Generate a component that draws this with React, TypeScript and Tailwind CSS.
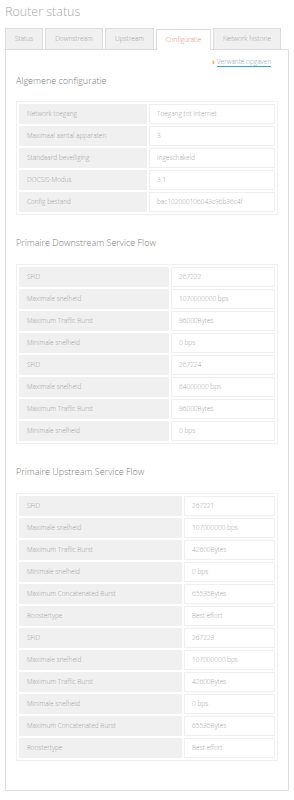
import React from 'react';

type Row = [string, string];

const general: Row[] = [
  ['Network toegang', 'Toegang tot Internet'],
  ['Maximaal aantal apparaten', '3'],
  ['Standaard beveiliging', 'Ingeschakeld'],
  ['DOCSIS-Modus', '3.1'],
  ['Config bestand', 'bac102000106043c96b36c4f'],
];

const downstream: Row[] = [
  ['SFID', '267222'],
  ['Maximale snelheid', '1070000000 bps'],
  ['Maximum Traffic Burst', '96000Bytes'],
  ['Minimale snelheid', '0 bps'],
  ['SFID', '267224'],
  ['Maximale snelheid', '64000000 bps'],
  ['Maximum Traffic Burst', '96000Bytes'],
  ['Minimale snelheid', '0 bps'],
];

const upstream: Row[] = [
  ['SFID', '267221'],
  ['Maximale snelheid', '107000000 bps'],
  ['Maximum Traffic Burst', '42600Bytes'],
  ['Minimale snelheid', '0 bps'],
  ['Maximum Concatenated Burst', '65535Bytes'],
  ['Roostertype', 'Best effort'],
  ['SFID', '267223'],
  ['Maximale snelheid', '107000000 bps'],
  ['Maximum Traffic Burst', '42600Bytes'],
  ['Minimale snelheid', '0 bps'],
  ['Maximum Concatenated Burst', '65535Bytes'],
  ['Roostertype', 'Best effort'],
];

const tabs: { label: string; width: string }[] = [
  { label: 'Status', width: 'w-[38px]' },
  { label: 'Downstream', width: 'w-[58px]' },
  { label: 'Upstream', width: 'w-[49px]' },
  { label: 'Configuratie', width: 'w-[55px]' },
  { label: 'Network historie', width: 'w-[68px]' },
];

function InfoTable({ rows, labelWidth }: { rows: Row[]; labelWidth: string }) {
  return (
    <table className="w-full border-separate border-spacing-[2px] border border-[#f0f0f0] bg-white text-[6.5px] text-[#a0a0a0]">
      <tbody>
        {rows.map(([label, value], i) => (
          <tr key={i} className="h-[20px]">
            <td className={`${labelWidth} bg-[#f0f0f0] pl-[8px]`}>{label}</td>
            <td className="border border-[#efefef] bg-white pl-[7px]">{value}</td>
          </tr>
        ))}
      </tbody>
    </table>
  );
}

export default function App() {
  return (
    <div className="min-h-[800px] w-[294px] bg-white px-[5px] pt-[4px] font-['Open_Sans',sans-serif] font-light">
      <h1 className="text-[12.5px] leading-[16px] font-light text-[#a8a8a8]">Router status</h1>

      <div className="mt-[8px] flex gap-[2px]">
        {tabs.map((t) => {
          const active = t.label === 'Configuratie';
          return (
            <div
              key={t.label}
              className={`${t.width} flex h-[21px] shrink-0 items-center justify-center whitespace-nowrap border border-b-0 border-[#dcdcdc] text-[6.5px] ${
                active ? 'relative top-[1px] bg-white text-[#f2866a]' : 'bg-[#f0f0f0] text-[#a0a0a0]'
              }`}
            >
              {t.label}
            </div>
          );
        })}
      </div>

      <div className="h-[742px] border border-[#dcdcdc] px-[10px]">
        <div className="mt-[6px] flex justify-end pr-[7px]">
          <a className="flex items-center gap-[2px] text-[6.5px] text-[#8aa0b0]">
            <span className="text-[8px] font-bold text-[#f5a020]">›</span>
            <span className="border-b border-[#2aa8e0] leading-[8px]">Verwante opgaven</span>
          </a>
        </div>

        <h2 className="mt-[7px] text-[9px] leading-[12px] text-[#7a7a7a]">Algemene configuratie</h2>
        <div className="mt-[14px]">
          <InfoTable rows={general} labelWidth="w-[128px]" />
        </div>

        <h2 className="mt-[22px] text-[9px] leading-[12px] text-[#7a7a7a]">Primaire Downstream Service Flow</h2>
        <div className="mt-[15px]">
          <InfoTable rows={downstream} labelWidth="w-[150px]" />
        </div>

        <h2 className="mt-[22px] text-[9px] leading-[12px] text-[#7a7a7a]">Primaire Upstream Service Flow</h2>
        <div className="mt-[15px]">
          <InfoTable rows={upstream} labelWidth="w-[163px]" />
        </div>
      </div>
    </div>
  );
}
